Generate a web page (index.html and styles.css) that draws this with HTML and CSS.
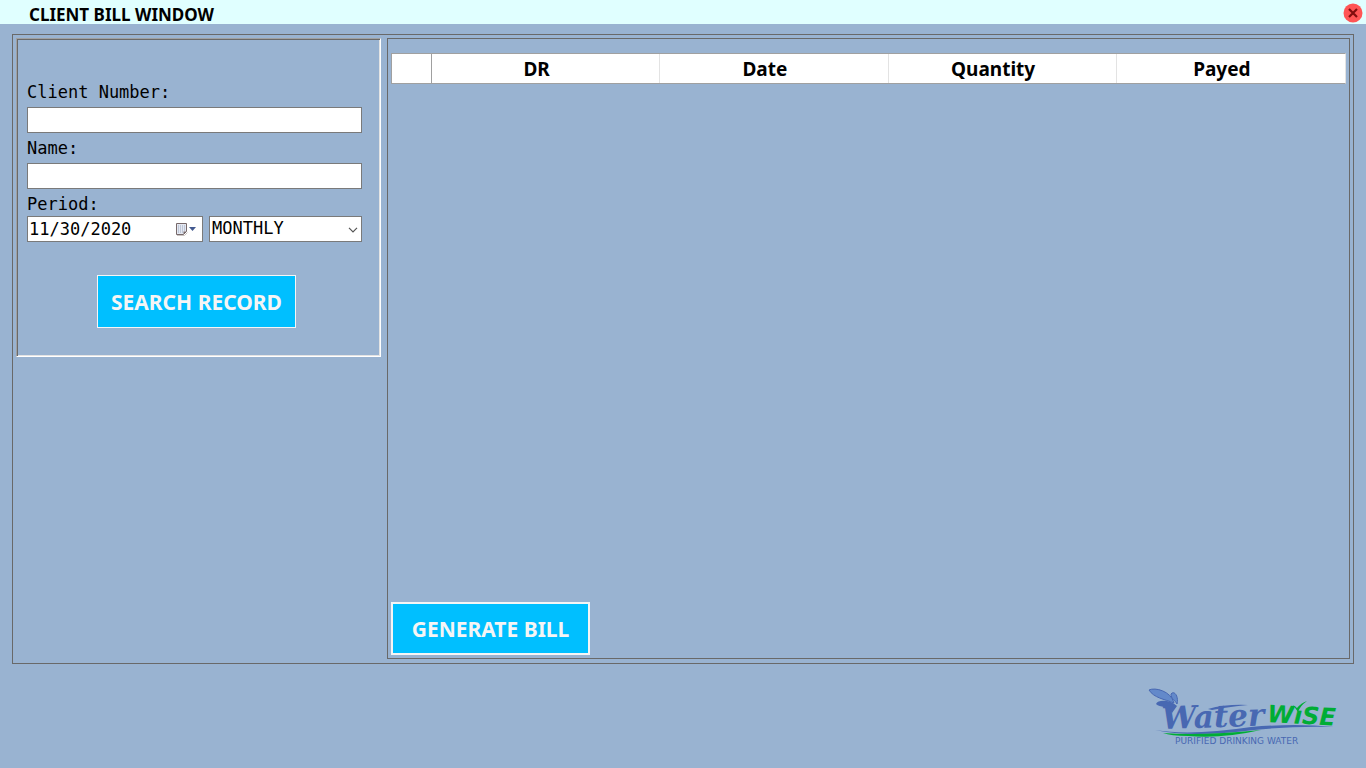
FILE: index.html
```html
<!DOCTYPE html>
<html lang="en">
<head>
<meta charset="utf-8">
<title>Client Bill Window</title>
<link rel="stylesheet" href="styles.css">
</head>
<body>
<header class="titlebar">
  <h1 class="title">CLIENT BILL WINDOW</h1>
  <button class="close" type="button" aria-label="Close">
    <svg width="20" height="20" viewBox="0 0 20 20" aria-hidden="true">
      <circle cx="10" cy="10" r="9.5" fill="#ff5555"/>
      <path d="M6 6l8 8M14 6l-8 8" stroke="#800d0d" stroke-width="2.2"/>
    </svg>
  </button>
</header>
<main class="frame">
  <form class="search">
    <label class="label" for="client-number">Client Number:</label>
    <input class="field" id="client-number" type="text">
    <label class="label" for="client-name">Name:</label>
    <input class="field" id="client-name" type="text">
    <label class="label label-period" for="period-date">Period:</label>
    <div class="period">
      <div class="date">
        <input class="date-input" id="period-date" type="text" value="11/30/2020">
        <button class="date-open" type="button" aria-label="Open calendar">
          <svg width="22" height="14" viewBox="0 0 22 14" aria-hidden="true">
            <path d="M2 13.500h7.500l3-3" fill="none" stroke="#c9c4c2"/>
            <path d="M1.500 1.500h10v8l-3 3h-7z" fill="#e4e8f1" stroke="#77696a"/>
            <path d="M3 4h7M3 6h7M3 8h7M3 10h5" stroke="#9aa6bf" stroke-dasharray="1 1"/>
            <path d="M8.500 12.500v-3h3z" fill="#77696a"/>
            <path d="M14 5h7l-3.500 4z" fill="#42598f"/>
          </svg>
        </button>
      </div>
      <div class="cycle">
        <select class="cycle-select" aria-label="Billing period">
          <option>MONTHLY</option>
        </select>
        <svg class="chevron" width="10" height="6" viewBox="0 0 10 6" aria-hidden="true">
          <path d="M1 .8l4 4 4-4" fill="none" stroke="#555" stroke-width="1.200"/>
        </svg>
      </div>
    </div>
    <button class="action action-search" type="button">SEARCH RECORD</button>
  </form>
  <section class="records">
    <table class="grid">
      <thead>
        <tr><th class="row-head"></th><th>DR</th><th>Date</th><th>Quantity</th><th>Payed</th></tr>
      </thead>
      <tbody></tbody>
    </table>
    <button class="action action-bill" type="button">GENERATE BILL</button>
  </section>
</main>
<footer class="footer">
  <svg class="logo" width="200" height="62" viewBox="0 0 200 62" role="img" aria-label="Waterwise purified drinking water">
    <g fill="#6389ca" stroke="#4868b2">
      <path d="M3 4C9 1 25 5 28 17C18 13 8 12 3 4z"/>
      <path d="M25 8C28 4 33 10 31 18C29 14 25 13 25 8z"/>
    </g>
    <path d="M10 18C12 13 25 14 31 20L26 27C22 19 14 22 10 18z" fill="#4868b2"/>
    <text class="logo-water" x="16" y="43" transform="rotate(-2 16 43)">Water</text>
    <path d="M62 23Q80 18 102 19Q82 21 66 24z" fill="#4868b2"/>
    <text class="logo-wise" x="121" y="36" transform="rotate(3 121 36)">WıSE</text>
    <path d="M147 19l4 3q4-5 10-7q-7 5-9 11z" fill="#00ad35"/>
    <path d="M9 44Q45 50 105 41Q150 37 188 41Q145 40 108 44Q45 52 9 44z" fill="#4868b2"/>
    <path d="M17 47Q55 50 115 44Q75 53 42 50Q25 50 17 47z" fill="#00ad35"/>
    <text class="logo-tag" x="29" y="58">PURIFIED DRINKING WATER</text>
  </svg>
</footer>
</body>
</html>
```
FILE: styles.css
```css
* { box-sizing: border-box; }

body {
  margin: 0;
  min-height: 100vh;
  display: flex;
  flex-direction: column;
  background: #99b3d1;
  color: #000;
  font-family: "Noto Sans", sans-serif;
}

button, input, select { margin: 0; border-radius: 0; }

.titlebar {
  height: 24px;
  display: flex;
  align-items: flex-start;
  justify-content: space-between;
  padding: 3px 3px 0 29px;
  background: #e0ffff;
}

.title { margin: 0; font-size: 17px; line-height: 24px; font-weight: 700; }

.close {
  width: 20px;
  height: 20px;
  padding: 0;
  border: 0;
  background: none;
}

.close svg, .date-open svg { display: block; }

.frame {
  flex: 1;
  display: flex;
  align-items: flex-start;
  gap: 6px;
  margin: 10px 12px 0;
  padding: 3px 3px 4px;
  border: 1px solid #696969;
}

.search {
  flex: none;
  width: 365px;
  display: flex;
  flex-direction: column;
  padding: 38px 18px 28px 10px;
  border: 1px solid;
  border-color: #a0a0a0 #fff #fff #a0a0a0;
  box-shadow: inset 1px 1px #696969, inset -1px -1px #e3e3e3;
}

.label, .field, .date-input, .cycle-select {
  font-family: "DejaVu Sans Mono", monospace;
  font-size: 17px;
}

.label { line-height: 30px; }
.label-period { line-height: 24px; padding-top: 3px; }

.field {
  height: 26px;
  padding: 0 3px;
  border: 1px solid #7a7a7a;
  background: #fff;
}

.period { display: flex; gap: 6px; }

.date {
  width: 176px;
  height: 26px;
  display: flex;
  align-items: center;
  padding: 0 5px 0 1px;
  border: 1px solid #7a7a7a;
  background: #fff;
}

.date-input { flex: 1; min-width: 0; padding: 0; border: 0; background: none; }
.date-open { padding: 0; border: 0; background: none; }

.cycle { position: relative; flex: 1; }

.cycle-select {
  display: block;
  width: 100%;
  height: 26px;
  padding: 0 20px 2px 2px;
  border: 1px solid #7a7a7a;
  background: #fff;
  color: #000;
  appearance: none;
}

.chevron { position: absolute; right: 4px; top: 11px; pointer-events: none; }

.action {
  width: 199px;
  height: 53px;
  padding: 0;
  background: #00bfff;
  color: #f5f5f5;
  font-family: "Noto Sans", sans-serif;
  font-size: 21px;
  font-weight: 700;
}

.action-search { margin: 33px 0 0 70px; border: 1px solid #f5f5f5; }
.action-bill { margin-top: auto; border: 2px solid #f5f5f5; }

.records {
  flex: 1;
  align-self: stretch;
  display: flex;
  flex-direction: column;
  align-items: flex-start;
  padding: 14px 3px 3px;
  border: 1px solid #696969;
}

.grid {
  width: 100%;
  table-layout: fixed;
  border-spacing: 0;
  border: 1px solid #a0a0a0;
  border-right-color: #e3e3e3;
  background: #fff;
}

.grid th {
  height: 29px;
  padding: 0 18px 0 0;
  border-right: 1px solid #e3e3e3;
  font-size: 19px;
  line-height: 28px;
  font-weight: 700;
}

.grid .row-head { width: 40px; padding: 0; border-right-color: #a0a0a0; }
.grid th:last-child { border-right: 0; }

.footer {
  height: 104px;
  display: flex;
  justify-content: flex-end;
  padding: 22px 20px 0 0;
}

.logo { display: block; }
.logo-water { fill: #4868b2; font: italic 700 31px "DejaVu Serif", serif; }
.logo-wise { fill: #00ad35; font: italic 700 24px "DejaVu Sans", sans-serif; }
.logo-tag { fill: #4868b2; font: 9px "DejaVu Sans", sans-serif; }
```
